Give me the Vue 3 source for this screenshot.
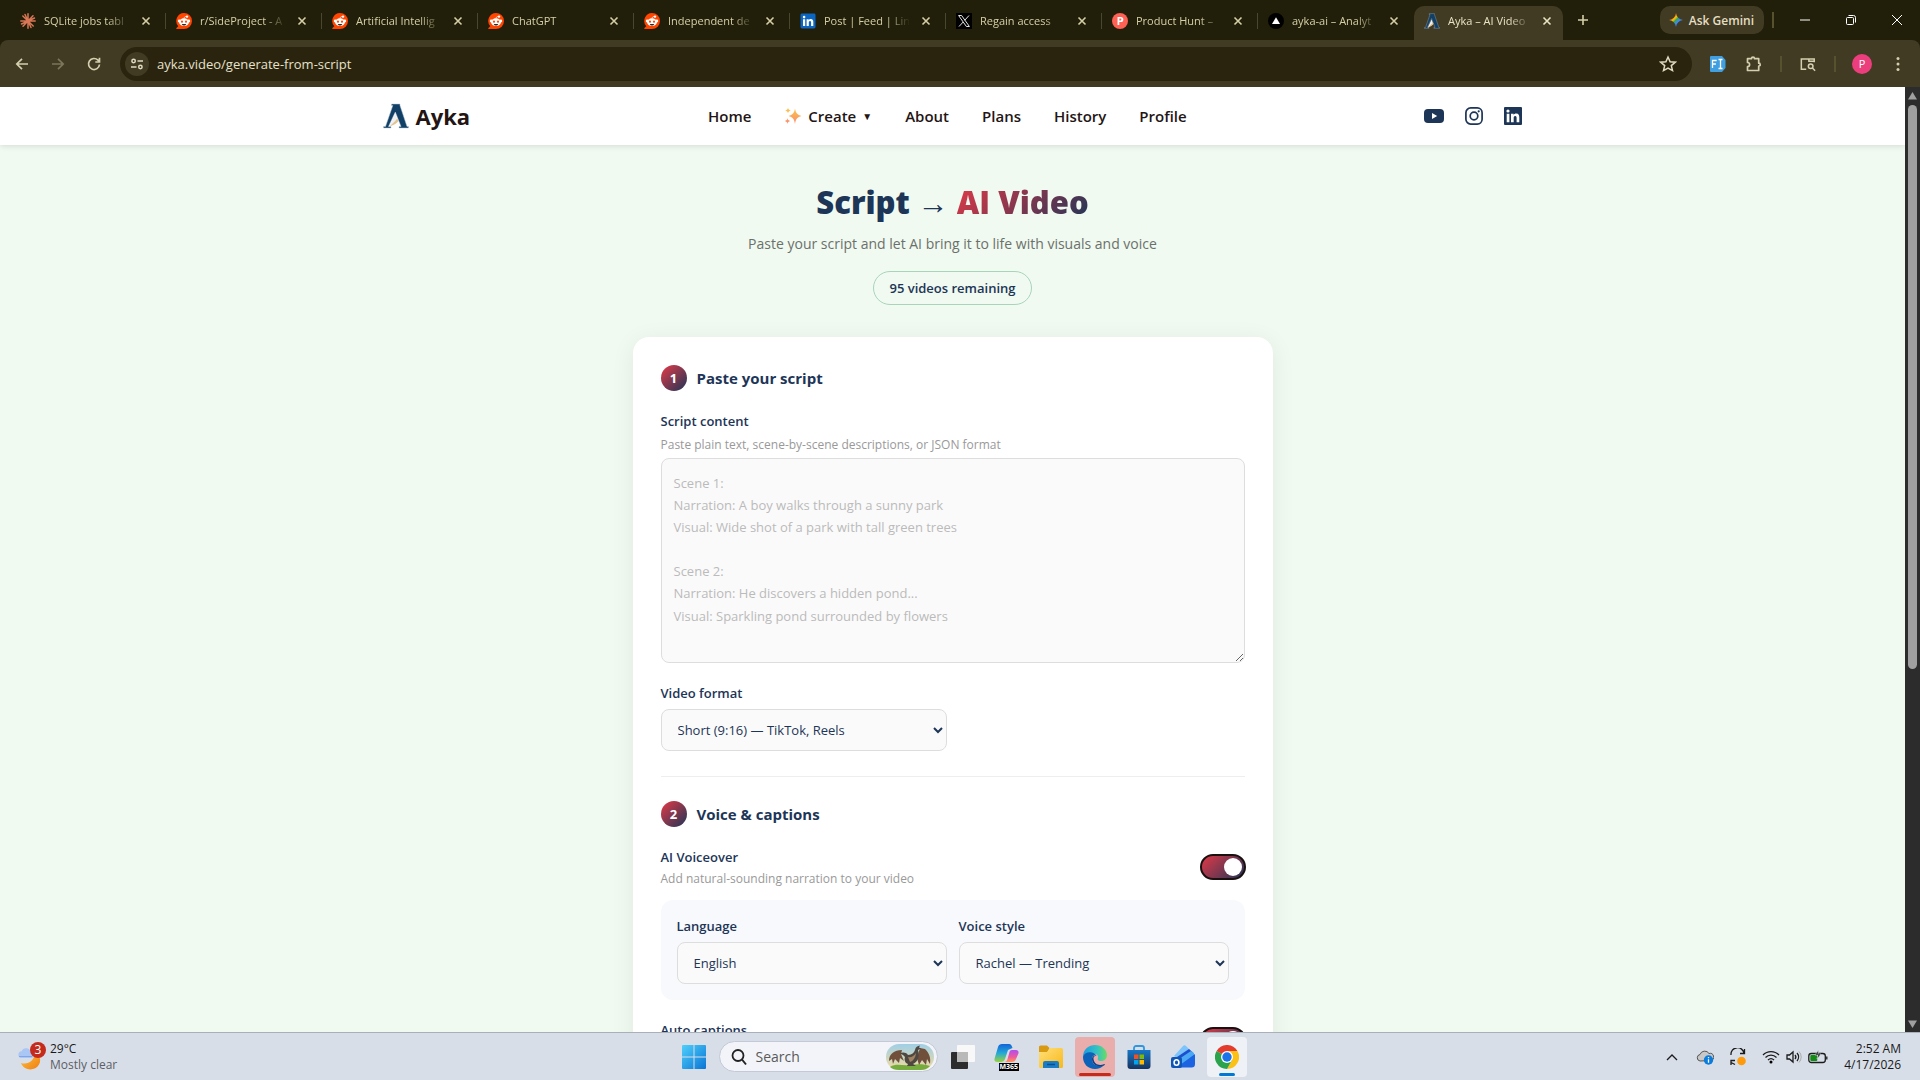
<script setup>
import { ref } from 'vue'

const tabs = [
  { icon: 'claude', title: 'SQLite jobs tabl' },
  { icon: 'reddit', title: 'r/SideProject - A' },
  { icon: 'reddit', title: 'Artificial Intellig' },
  { icon: 'reddit', title: 'ChatGPT' },
  { icon: 'reddit', title: 'Independent de' },
  { icon: 'linkedin', title: 'Post | Feed | Lin' },
  { icon: 'x', title: 'Regain access' },
  { icon: 'producthunt', title: 'Product Hunt –' },
  { icon: 'vercel', title: 'ayka-ai – Analyt' },
  { icon: 'ayka', title: 'Ayka – AI Video', active: true }
]

const placeholder = `Scene 1:
Narration: A boy walks through a sunny park
Visual: Wide shot of a park with tall green trees

Scene 2:
Narration: He discovers a hidden pond...
Visual: Sparkling pond surrounded by flowers`

const url = ref('ayka.video/generate-from-script')
const script = ref('')
const format = ref('short')
const language = ref('en')
const voice = ref('rachel')
const voiceover = ref(true)
const captions = ref(true)
</script>

<template>
  <div class="screen">
    <!-- shared icon shapes -->
    <svg class="sprite" width="0" height="0" aria-hidden="true">
      <defs>
        <linearGradient id="gFolder" x1="0" y1="0" x2="1" y2="1"><stop offset="0" stop-color="#ffe07a" /><stop offset="1" stop-color="#f8b81a" /></linearGradient>
        <linearGradient id="gWin" x1="0" y1="0" x2="1" y2="1"><stop offset="0" stop-color="#4fd0fb" /><stop offset="1" stop-color="#0a74d4" /></linearGradient>
        <linearGradient id="gEdge" x1="0" y1="0" x2="1" y2="0"><stop offset="0" stop-color="#1d9be2" /><stop offset=".6" stop-color="#35c3c0" /><stop offset="1" stop-color="#6bdc62" /></linearGradient>
        <linearGradient id="gStore" x1="0" y1="0" x2="0" y2="1"><stop offset="0" stop-color="#1677c6" /><stop offset="1" stop-color="#17345f" /></linearGradient>
        <linearGradient id="gMoon" x1="0" y1="0" x2="1" y2="1"><stop offset="0" stop-color="#ffc33d" /><stop offset="1" stop-color="#ef7d12" /></linearGradient>
        <linearGradient id="gSpark" x1="0" y1="0" x2="0" y2="1"><stop offset="0" stop-color="#fbc94a" /><stop offset="1" stop-color="#f98b6f" /></linearGradient>
        <linearGradient id="gCopA" x1="0" y1="0" x2="0" y2="1"><stop offset="0" stop-color="#1463d8" /><stop offset=".5" stop-color="#22a8d8" /><stop offset="1" stop-color="#9bd33c" /></linearGradient>
        <linearGradient id="gCopB" x1="0" y1="0" x2="0" y2="1"><stop offset="0" stop-color="#b04df0" /><stop offset=".6" stop-color="#ef5a9c" /><stop offset="1" stop-color="#ff9a52" /></linearGradient>
        <linearGradient id="gGem" x1="0" y1="0" x2="1" y2="1"><stop offset=".2" stop-color="#ea4335" /><stop offset=".4" stop-color="#fbbc04" /><stop offset=".5" stop-color="#34a853" /><stop offset=".62" stop-color="#4285f4" /></linearGradient>
        <linearGradient id="gSky" x1="0" y1="0" x2="0" y2="1"><stop offset="0" stop-color="#9fcfe6" /><stop offset="1" stop-color="#f3dba0" /></linearGradient>
      </defs>

      <symbol id="claude" viewBox="0 0 16 16">
        <g stroke="#d97757" stroke-width="1.5" stroke-linecap="round">
          <path d="M8 8V.8M8 8v7.2M8 8H.8M8 8h7.2M8 8 2.8 3M8 8l5.2 5M8 8l5-5.2M8 8l-5 5.2M8 8 5 1.5M8 8l3 6.5M8 8l6.5-3M8 8l-6.5 3" />
        </g>
      </symbol>
      <symbol id="reddit" viewBox="0 0 16 16">
        <path fill="#ff4500" d="M8 0a8 8 0 1 1 0 16H.7c-.5 0-.7-.6-.3-.9l1.9-1.8A8 8 0 0 1 8 0Z" />
        <circle cx="3.2" cy="8" r="1.4" fill="#fff" /><circle cx="12.8" cy="8" r="1.4" fill="#fff" />
        <ellipse cx="8" cy="9.2" rx="4.9" ry="3.9" fill="#fff" />
        <circle cx="11" cy="3.6" r="1.2" fill="#fff" />
        <path d="M8 5.6c.1-1.5.9-2.1 2.3-2" fill="none" stroke="#fff" stroke-width=".7" />
        <circle cx="6" cy="8.7" r="1.1" fill="#ff4500" /><circle cx="10" cy="8.7" r="1.1" fill="#ff4500" />
        <path d="M5.8 10.9h4.4c-.4 1-1.2 1.5-2.2 1.5s-1.8-.5-2.2-1.5Z" fill="#33261f" />
      </symbol>
      <symbol id="linkedin" viewBox="0 0 16 16">
        <rect x=".5" y=".5" width="15" height="15" rx="1.4" fill="#0a66c2" />
        <g fill="#fff"><circle cx="4.1" cy="4.1" r="1.3" /><path d="M3 6.3h2.2V13H3zM6.6 6.3h2.1v1c.4-.7 1.1-1.2 2.1-1.2 2 0 2.5 1.3 2.5 3.1V13h-2.2V9.7c0-.9-.1-1.7-1.1-1.7s-1.2.8-1.2 1.7V13H6.6z" /></g>
      </symbol>
      <symbol id="x" viewBox="0 0 16 16">
        <rect width="16" height="16" fill="#000" />
        <path d="M2.6 2.5h3l7.8 11h-3zM13 2.5 8.7 7.3M7.2 9 3 13.5" fill="none" stroke="#fff" stroke-width=".9" />
      </symbol>
      <symbol id="producthunt" viewBox="0 0 16 16">
        <circle cx="8" cy="8" r="8" fill="#ff6154" />
        <path fill="#fff" fill-rule="evenodd" d="M5.5 4h3.3a2.5 2.5 0 0 1 0 5.1H7.3V12H5.5zm1.8 1.6v1.9h1.4a1 1 0 0 0 0-1.9z" />
      </symbol>
      <symbol id="vercel" viewBox="0 0 16 16">
        <circle cx="8" cy="8" r="8" fill="#000" /><path d="m8 4.2 4 6.9H4z" fill="#fff" />
      </symbol>
      <symbol id="ayka" viewBox="0 0 26 26">
        <path d="M8.500 1h8.500v1.500L24 23.500h1.500V25H16v-1.500h2L12.300 9 5.500 23.500H8V25H.500v-1.500H2.500L9.800 2.500H8.500z" fill="#123f66" stroke="#b9c9d6" stroke-width=".5" />
        <path d="M12.300 10.500 15 17.500c-2 1-4 3-7.500 5.500l-1.300.5z" fill="#eef1f3" />
        <path d="M14.200 15.500 15.500 18c-2 2.500-4.500 4-8.700 5.500C9 20.500 12 19 14.200 15.500z" fill="#e3c48f" />
      </symbol>
      <symbol id="close" viewBox="0 0 16 16"><path d="m4.5 4.5 7 7m0-7-7 7" stroke="currentColor" stroke-width="1.6" fill="none" /></symbol>
    </svg>

    <div class="tab-strip">
      <div class="tabs" role="tablist">
        <div v-for="(tab, i) in tabs" :key="i" class="tab" :class="{ active: tab.active }" role="tab">
          <svg class="favicon"><use :href="'#' + tab.icon" /></svg>
          <span class="tab-title">{{ tab.title }}</span>
          <button class="tab-close" aria-label="Close tab"><svg><use href="#close" /></svg></button>
        </div>
      </div>
      <button class="new-tab" aria-label="New tab">
        <svg width="16" height="16" viewBox="0 0 16 16"><path d="M8 3v10M3 8h10" stroke="currentColor" stroke-width="1.6" /></svg>
      </button>
      <div class="window-tools">
        <button class="gemini">
          <svg width="14" height="16" viewBox="0 0 14 14"><path fill="url(#gGem)" d="M7 0c.6 4 3 6.4 7 7-4 .6-6.4 3-7 7-.6-4-3-6.400-7-7 4-.6 6.400-3 7-7Z" /></svg>
          Ask Gemini
        </button>
        <i class="tool-sep"></i>
        <button class="win-btn" aria-label="Minimize"><svg width="12" height="12" viewBox="0 0 12 12"><path d="M1 6h10" /></svg></button>
        <button class="win-btn" aria-label="Restore"><svg width="12" height="12" viewBox="0 0 12 12"><rect x="1.5" y="3.5" width="7" height="7" rx="1" /><path d="M3.5 1.5h5a2 2 0 0 1 2 2v5" /></svg></button>
        <button class="win-btn" aria-label="Close"><svg width="12" height="12" viewBox="0 0 12 12"><path d="m1 1 10 10M11 1 1 11" /></svg></button>
      </div>
    </div>

    <div class="toolbar">
      <button class="nav-btn" aria-label="Back"><svg viewBox="0 0 16 16"><path d="M14 8H3M8 2.8 2.8 8 8 13.2" /></svg></button>
      <button class="nav-btn dim" aria-label="Forward"><svg viewBox="0 0 16 16"><path d="M2 8h11M8 2.8 13.2 8 8 13.2" /></svg></button>
      <button class="nav-btn" aria-label="Reload"><svg viewBox="0 0 16 16"><path d="M13.5 8.500A5.500 5.500 0 1 1 12 4.200l1.400 1.500M13.500 1.800v4.200H9.300" /></svg></button>
      <div class="omnibox">
        <span class="site-info">
          <svg width="14" height="14" viewBox="0 0 14 14"><circle cx="3.6" cy="4" r="1.7" /><path d="M7.5 4H13M1 10h5.5" /><circle cx="10.4" cy="10" r="1.7" /></svg>
        </span>
        <input v-model="url" class="url" aria-label="Address bar" type="text">
        <svg width="18" height="18" viewBox="0 0 18 18" class="star"><path d="m9 2 2.100 4.700 5.100.5-3.900 3.400 1.200 5L9 13l-4.500 2.600 1.200-5-3.900-3.400 5.100-.5z" /></svg>
      </div>
      <div class="extensions">
        <button class="nav-btn" aria-label="Font finder">
          <svg viewBox="0 0 16 16"><path d="M1 0h11l3.500 4v8L12 16H1a1 1 0 0 1-1-1V1a1 1 0 0 1 1-1Z" fill="#3f9fe0" stroke="none" /><path d="M2.500 12V4.500h4.200M2.500 8h3.400M8.500 3.500h4M8.500 12.500h4M10.500 3.500v9" stroke="#fff" stroke-width="1.3" /></svg>
        </button>
        <button class="nav-btn" aria-label="Extensions"><svg viewBox="0 0 16 16"><path d="M1.500 2.700h4a1.500 1.500 0 0 1 3 0h4.200v4.500a1.500 1.500 0 0 1 0 3v4.300H1.500V10.700a2.100 2.100 0 0 0 0-4.200z" stroke-linejoin="round" /></svg></button>
        <i class="tool-sep"></i>
        <button class="nav-btn" aria-label="Search in page"><svg viewBox="0 0 18 16"><path d="M7 14H1.500V2.500H16V6M10 2.500h6V5h-6z" /><circle cx="12" cy="10.5" r="2.6" /><path d="m14 12.500 3 3" /></svg></button>
        <i class="tool-sep"></i>
        <button class="avatar">P</button>
        <button class="nav-btn" aria-label="Menu"><svg viewBox="0 0 16 16"><g fill="#d5cfb0" stroke="none"><circle cx="8" cy="2.5" r="1.5" /><circle cx="8" cy="8" r="1.5" /><circle cx="8" cy="13.5" r="1.5" /></g></svg></button>
      </div>
    </div>

    <div class="viewport">
      <div class="page">
        <header class="site-header">
          <div class="container">
            <a class="brand" href="#">
              <svg width="26" height="26"><use href="#ayka" /></svg>
              <span>Ayka</span>
            </a>
            <nav class="site-nav">
              <a href="#">Home</a>
              <a href="#" class="create">
                <svg width="18" height="18" viewBox="0 0 18 18"><path fill="url(#gSpark)" d="M11 1.500c.8 4.500 2.300 6.500 6.500 7.500-4.200 1-5.700 3-6.500 8-.8-5-2.300-7-6.500-8C8.700 8 10.200 6 11 1.500ZM4 .5c.3 1.800 1 2.500 2.700 3C5 4 4.300 4.700 4 6.500c-.3-1.800-1-2.500-2.700-3C3 3 3.700 2.300 4 .5ZM3.500 11c.3 1.800 1 2.500 2.700 3-1.700.5-2.400 1.200-2.700 3-.3-1.800-1-2.500-2.700-3 1.700-.5 2.400-1.200 2.700-3Z" /></svg>
                Create <small>▼</small>
              </a>
              <a href="#">About</a>
              <a href="#">Plans</a>
              <a href="#">History</a>
              <a href="#">Profile</a>
            </nav>
            <div class="socials">
              <a href="#" aria-label="YouTube"><svg width="20" height="18" viewBox="0 0 20 18"><rect y="2" width="20" height="14" rx="4" fill="#1d3557" /><path d="m8 6 5.200 3L8 12z" fill="#fff" /></svg></a>
              <a href="#" aria-label="Instagram"><svg width="18" height="18" viewBox="0 0 18 18"><g fill="none" stroke="#1d3557" stroke-width="1.7"><rect x=".9" y=".9" width="16.2" height="16.2" rx="4.8" /><circle cx="9" cy="9" r="3.8" /></g><circle cx="13.7" cy="4.3" r="1.1" fill="#1d3557" /></svg></a>
              <a href="#" aria-label="LinkedIn"><svg width="18" height="18" viewBox="0 0 18 18"><rect width="18" height="18" rx="1" fill="#1d3557" /><g fill="#fff"><circle cx="4" cy="4" r="1.6" /><path d="M2.700 6.800h2.700v8.500H2.700zM7 6.800h2.600V8c.5-.8 1.400-1.400 2.600-1.400 2.600 0 3.100 1.700 3.100 4v4.700h-2.700v-4.200c0-1 0-2.200-1.400-2.200s-1.500 1-1.500 2.200v4.200H7z" /></g></svg></a>
            </div>
          </div>
        </header>

        <main class="content">
          <h1>Script → <span class="accent">AI Video</span></h1>
          <p class="subtitle">Paste your script and let AI bring it to life with visuals and voice</p>
          <div class="badge">95 videos remaining</div>

          <form class="card" @submit.prevent>
            <section>
              <h2 class="step"><span class="step-num">1</span>Paste your script</h2>
              <div class="field">
                <label for="script">Script content</label>
                <p class="hint">Paste plain text, scene-by-scene descriptions, or JSON format</p>
                <textarea id="script" v-model="script" rows="8" :placeholder="placeholder"></textarea>
              </div>
              <div class="field-row">
                <div class="field">
                  <label for="format">Video format</label>
                  <select id="format" v-model="format">
                    <option value="short">Short (9:16) — TikTok, Reels</option>
                  </select>
                </div>
              </div>
            </section>

            <section class="divided">
              <h2 class="step"><span class="step-num">2</span>Voice &amp; captions</h2>
              <div class="toggle-row">
                <div>
                  <label for="voiceover">AI Voiceover</label>
                  <p class="toggle-hint">Add natural-sounding narration to your video</p>
                </div>
                <input id="voiceover" v-model="voiceover" type="checkbox" class="switch">
              </div>
              <div class="panel field-row">
                <div class="field">
                  <label for="language">Language</label>
                  <select id="language" v-model="language">
                    <option value="en">English</option>
                  </select>
                </div>
                <div class="field">
                  <label for="voice">Voice style</label>
                  <select id="voice" v-model="voice">
                    <option value="rachel">Rachel — Trending</option>
                  </select>
                </div>
              </div>
              <div class="toggle-row">
                <div>
                  <label for="captions">Auto captions</label>
                  <p class="toggle-hint">&nbsp;</p>
                </div>
                <input id="captions" v-model="captions" type="checkbox" class="switch">
              </div>
            </section>
          </form>
        </main>
      </div>

      <div class="scrollbar">
        <svg width="9" height="8" viewBox="0 0 9 8"><path d="M4.500 0 9 7.500H0z" /></svg>
        <div class="track"><div class="thumb"></div></div>
        <svg width="9" height="8" viewBox="0 0 9 8"><path d="M4.500 8 0 .5h9z" /></svg>
      </div>
    </div>

    <footer class="taskbar">
      <div class="weather">
        <div class="weather-icon">
          <svg width="26" height="28" viewBox="0 0 26 28"><path d="M3 20c7 2 13-2 14-10 5 2 6.500 7 4 11.500C17 28.500 6 28 3 20Z" fill="url(#gMoon)" /><path d="M3 15a3.400 3.400 0 0 1 .6-6.700 4.700 4.700 0 0 1 9 .7A3 3 0 0 1 13 15z" fill="#a9c6f4" /><path d="M1 13.500h13" stroke="#7fa6e6" /></svg>
          <b>3</b>
        </div>
        <div class="weather-text"><span>29°C</span><span class="muted">Mostly clear</span></div>
      </div>

      <div class="apps">
        <button class="app" aria-label="Start"><svg width="24" height="24" viewBox="0 0 24 24"><path fill="url(#gWin)" d="M0 1a1 1 0 0 1 1-1h10.500v11.500H0zM12.500 0H23a1 1 0 0 1 1 1v10.500H12.500zM0 12.500h11.500V24H1a1 1 0 0 1-1-1zM12.500 12.500H24V23a1 1 0 0 1-1 1H12.500z" /></svg></button>
        <button class="search">
          <svg width="16" height="18" viewBox="0 0 16 18"><circle cx="7" cy="7.5" r="5.5" fill="none" stroke="#222" stroke-width="1.8" /><path d="m11 11.500 4 5" stroke="#222" stroke-width="2" /></svg>
          <span>Search</span>
          <svg class="search-art" width="48" height="26" viewBox="0 0 48 26">
            <rect width="48" height="26" rx="13" fill="url(#gSky)" />
            <path d="M4 23c6-4 12-1 20-2s14-1 20 1c-3 3-6 4-9 4H13c-4 0-7-1-9-3Z" fill="#76ac3d" />
            <path d="M3 17C3 10 8 6 16 6l-1 4 3 7-4-3-1 5-4-4-2 5-1-5z" fill="#70503a" />
            <path d="M34 4l5 1c4 4 6 8 5 15l-3-5-1 6-4-5-3 5-2-7z" fill="#70503a" />
            <path d="M14 9.500c2-1.500 6-1.500 8 1.500 4-.5 6-2 7-5 .5-3 2.500-4 5-4.500l-1 2 2 1-3 1.500c2 6 0 12-5 14l3 2h-9l1-2c-3-1-4-4-3-7l-2-2z" fill="#4f4840" />
            <path d="M22 13c3 1 6-1 8-4-.5 5-3 8-6 9z" fill="#a08262" />
          </svg>
        </button>
        <button class="app" aria-label="Task view"><svg width="24" height="24" viewBox="0 0 24 24"><rect x="6" width="18" height="17" rx="1" fill="#f8f8f8" /><rect y="7" width="17" height="17" rx="1" fill="#2d2d2d" /><path d="M6 7h11v10H6z" fill="#b9b9b9" /></svg></button>
        <button class="app" aria-label="Microsoft 365">
          <svg width="26" height="26" viewBox="0 0 26 26"><path d="M8 0h7c2 0 3 2 3.500 4L14 6l-3 9c-.7 2-2 3-4 3H3c-2 0-3-1.500-2.400-3.500L4 3c.6-2 2-3 4-3Z" fill="url(#gCopA)" /><path d="M18 6h4c2 0 3 1.500 2.400 3.500L22 15c-.7 2-2 3-4 3h-8c2 0 3-1 3.500-3l2-7c.4-1.300 1-2 2.500-2Z" fill="url(#gCopB)" /></svg>
          <span class="m365">M365</span>
        </button>
        <button class="app" aria-label="Files"><svg width="24" height="24" viewBox="0 0 24 24"><path d="M0 2a1.500 1.500 0 0 1 1.500-1.500H8L10.500 3 8 8H0z" fill="#d89a10" /><path d="M0 7h8l3-4h11.500A1.500 1.500 0 0 1 24 4.500v17a1.500 1.500 0 0 1-1.500 1.500h-21A1.500 1.500 0 0 1 0 21.500z" fill="url(#gFolder)" /><path d="M4 23v-5a2 2 0 0 1 2-2h12a2 2 0 0 1 2 2v5z" fill="#1a7cc4" /><path d="M8 19.500h8" stroke="#0c4f91" stroke-width="1.5" /></svg></button>
        <button class="app alert" aria-label="Edge"><svg width="24" height="24" viewBox="0 0 24 24"><path d="M0 12C0 4 6 0 12 0c7 0 12 5 12 10 0 4-3 6-6 6-2.500 0-4-1-3-3 .5-1 .2-4-3.500-4C7 9 5 14 0 12Z" fill="url(#gEdge)" /><path d="M0 12C1 8 5 6.500 9 7.500c2 .5 4 2 4.500 3.500C11 9.500 9 11 9 14c0 5 5 9 12 6-2 2.800-5.500 4-9 4C5 24 0 19 0 12Z" fill="#0b62b8" /><path d="M9 14c0 5 5 9 12 6.500.8-.5 1.300-1.500.5-1.500-5 2-10 1-11-5-.3-1.500.5-2.500 1.500-3C10 10.500 9 12 9 14Z" fill="#0c3f86" /></svg></button>
        <button class="app" aria-label="Store"><svg width="24" height="24" viewBox="0 0 24 24"><path d="M7 6V3a2 2 0 0 1 2-2h6a2 2 0 0 1 2 2v3" fill="none" stroke="#2f97e0" stroke-width="1.8" /><path d="M.5 5h23v16a3 3 0 0 1-3 3h-17a3 3 0 0 1-3-3z" fill="url(#gStore)" /><path d="M7 9.500h4.500V14H7z" fill="#f25022" /><path d="M12.500 9.500H17V14h-4.500z" fill="#7fba00" /><path d="M7 15h4.500v4.500H7z" fill="#00a4ef" /><path d="M12.500 15H17v4.500h-4.500z" fill="#ffb900" /></svg></button>
        <button class="app" aria-label="Outlook"><svg width="24" height="24" viewBox="0 0 24 24"><path d="M3 11 12 1a2 2 0 0 1 3 0l4 4-9 10z" fill="#7cc4fb" /><path d="M6 12 18 4l4 3.500L11 16z" fill="#1a4fd0" /><path d="m8 14 12-8 3 2v4l-12 8z" fill="#4aa8f5" /><path d="m9 20 15-11v10a3.500 3.500 0 0 1-3.500 3.500H9z" fill="#1b63e0" /><rect y="12" width="11" height="11" rx="2" fill="#0f55b5" /><ellipse cx="5.5" cy="17.5" rx="2.4" ry="2.7" fill="none" stroke="#fff" stroke-width="1.6" /></svg></button>
        <button class="app current" aria-label="Chrome"><svg width="24" height="24" viewBox="0 0 24 24"><path d="M12 12 1.600 6A12 12 0 0 1 22.400 6z" fill="#e33b2e" /><path d="M12 12V6h10.400A12 12 0 0 1 12 24l5-9z" fill="#fbc116" /><path d="M12 12l5 3-5 9A12 12 0 0 1 1.600 6z" fill="#2ba24c" /><circle cx="12" cy="12" r="6" fill="#fff" /><circle cx="12" cy="12" r="4.7" fill="#1a73e8" /></svg></button>
      </div>

      <div class="tray">
        <svg width="12" height="8" viewBox="0 0 12 8"><path d="m1 7 5-5 5 5" class="line" /></svg>
        <svg width="18" height="16" viewBox="0 0 18 16" class="cloud"><path d="M4 12a3.300 3.300 0 0 1 0-6.500A5 5 0 0 1 13 4.500a3.600 3.600 0 0 1 2 7z" fill="#c8c8c8" stroke="#555" /><circle cx="12.5" cy="11" r="4.7" fill="#0b7cdb" /><path d="M12.500 8v1.300M12.500 10.300v3.500" stroke="#fff" stroke-width="1.3" /></svg>
        <svg width="18" height="18" viewBox="0 0 18 18" class="sync"><path d="M2 7a6.500 6.500 0 0 1 13-1.500M15.500 1v4.500H11M6 16.500l-4-2M2 17v-4.500h4" class="line" /><circle cx="12.5" cy="13" r="4.3" fill="#ff9a0a" /></svg>
        <svg width="18" height="14" viewBox="0 0 18 14" class="wifi"><path d="M1 5a11 11 0 0 1 16 0M3.500 7.500a7.700 7.700 0 0 1 11 0M6 10a4.400 4.400 0 0 1 6 0" class="line" /><circle cx="9" cy="12" r="1.5" /></svg>
        <svg width="16" height="14" viewBox="0 0 16 14"><path d="M1 5h2.500L7 2v10L3.500 9H1zM9 5a3 3 0 0 1 0 4M11 3a6 6 0 0 1 0 8" class="line" /><path d="M13 1.500a8 8 0 0 1 0 11" stroke="#aaa" fill="none" /></svg>
        <svg width="20" height="14" viewBox="0 0 20 14"><rect x=".8" y="3.5" width="16.5" height="9" rx="2.5" class="line" /><path d="M18.800 6.500v3" class="line" /><rect x="2.3" y="5" width="7" height="6" rx="1" fill="#138a13" /><path d="M10.500 0 7 5h3l-1 4 4-5h-3z" fill="#111" stroke="#d9dfe9" stroke-width=".6" /></svg>
        <div class="clock"><span>2:52 AM</span><span>4/17/2026</span></div>
      </div>
    </footer>
  </div>
</template>

<style>
body {
  margin: 0;
  overflow: hidden;
}
</style>

<style scoped>
.screen {
  height: 100vh;
  display: flex;
  flex-direction: column;
  font-family: "Segoe UI", "Open Sans", "Noto Sans", sans-serif;
  background: #211f09;
}

.screen *,
.screen *::before {
  box-sizing: border-box;
}

.sprite {
  position: absolute;
}

button {
  font: inherit;
  color: inherit;
  background: none;
  border: none;
  padding: 0;
}

button,
a {
  display: flex;
  align-items: center;
  justify-content: center;
}

a {
  color: inherit;
  text-decoration: none;
}

p,
h1,
h2 {
  margin: 0;
}

/* browser window */
.tab-strip {
  display: flex;
  align-items: flex-end;
  height: 40px;
  padding-left: 10px;
  background: #211f09;
  color: #d5cfa8;
  flex-shrink: 0;
}

.tabs {
  display: flex;
}

.tab {
  position: relative;
  display: flex;
  align-items: center;
  width: 156px;
  height: 34px;
  padding: 0 12px 5px 10px;
  gap: 8px;
  font-size: 11px;
}

.tab::after {
  content: '';
  position: absolute;
  right: 0;
  top: 7px;
  width: 1px;
  height: 16px;
  background: #4a4630;
}

.tab.active {
  width: 149px;
  padding-right: 8px;
  background: #413b24;
  color: #e9e3c4;
  border-radius: 10px 10px 0 0;
}

.tab.active::after,
.tab:nth-last-child(2)::after {
  display: none;
}

.favicon {
  width: 16px;
  height: 16px;
  flex-shrink: 0;
}

.tab-title {
  flex: 1;
  white-space: nowrap;
  mask-image: linear-gradient(90deg, #000 74%, transparent 100%);
}

.tab-close svg {
  width: 16px;
  height: 16px;
}

.new-tab {
  width: 40px;
  height: 40px;
}

.window-tools {
  display: flex;
  align-items: center;
  align-self: stretch;
  margin-left: auto;
}

.gemini {
  height: 28px;
  padding: 0 10px 0 9px;
  gap: 6px;
  border-radius: 10px;
  background: #413b24;
  color: #e4dec2;
  font-size: 12px;
  font-weight: 600;
}

.tool-sep {
  width: 2px;
  height: 16px;
  margin: 0 8px;
  background: #57512f;
}

.win-btn {
  width: 46px;
  height: 40px;
}

.win-btn svg {
  fill: none;
  stroke: #fff;
}

.toolbar {
  display: flex;
  align-items: center;
  height: 47px;
  padding: 0 4px;
  background: #413b24;
  border-radius: 8px 8px 0 0;
  flex-shrink: 0;
}

.nav-btn {
  width: 36px;
  height: 36px;
  color: #d5cfb0;
}

.nav-btn.dim {
  color: #7c765a;
}

.nav-btn svg {
  width: 16px;
  height: 16px;
  fill: none;
  stroke: currentColor;
  stroke-width: 1.7;
}

.omnibox {
  flex: 1;
  display: flex;
  align-items: center;
  height: 34px;
  margin: 0 8px;
  padding: 0 15px 0 5px;
  border-radius: 17px;
  background: #2a240e;
}

.site-info {
  display: flex;
  align-items: center;
  justify-content: center;
  width: 24px;
  height: 24px;
  border-radius: 50%;
  background: #413b24;
}

.site-info svg,
.star {
  fill: none;
  stroke: #e0dac0;
  stroke-width: 1.5;
}

.url {
  flex: 1;
  border: none;
  padding: 0 8px;
  background: none;
  color: #e6e1cb;
  font: inherit;
  font-size: 13px;
}

.extensions {
  display: flex;
  align-items: center;
}

.avatar {
  width: 20px;
  height: 20px;
  margin: 0 8px;
  border-radius: 50%;
  background: #ec3e7c;
  color: #fff;
  font-size: 11px;
}

/* web page */
.viewport {
  flex: 1;
  min-height: 0;
  display: flex;
}

.page {
  flex: 1;
  overflow: hidden;
  background: #f0faf0;
}

.site-header {
  position: relative;
  background: #fff;
  box-shadow: 0 1px 6px rgba(0, 0, 0, 0.12);
}

.container {
  display: flex;
  align-items: center;
  justify-content: space-between;
  max-width: 1140px;
  height: 58px;
  margin: 0 auto;
  color: #241515;
}

.brand {
  gap: 7px;
  font-size: 22px;
  font-weight: 700;
}

.site-nav {
  display: flex;
  gap: 33px;
  font-size: 15px;
  font-weight: 600;
}

.create {
  gap: 6px;
}

.create small {
  font-size: 10px;
}

.socials {
  display: flex;
  gap: 21px;
}

.content {
  display: flex;
  flex-direction: column;
  align-items: center;
  padding-top: 37px;
}

h1 {
  font-size: 31px;
  line-height: 40px;
  font-weight: 800;
  color: #1d3557;
}

.accent {
  background: linear-gradient(135deg, #e63946, #1d3557);
  background-clip: text;
  -webkit-background-clip: text;
  -webkit-text-fill-color: transparent;
}

.subtitle {
  margin-top: 10px;
  font-size: 14px;
  line-height: 24px;
  color: #6c706c;
}

.badge {
  margin-top: 15px;
  padding: 0 15px;
  border: 1px solid #a8d5ba;
  border-radius: 17px;
  font-size: 13px;
  line-height: 32px;
  font-weight: 600;
  color: #1d3557;
}

.card {
  width: 100%;
  max-width: 640px;
  margin-top: 32px;
  padding: 28px;
  border-radius: 16px;
  background: #fff;
  box-shadow: 0 4px 24px rgba(0, 0, 0, 0.07);
  color: #1d3557;
}

.divided {
  margin-top: 25px;
  padding-top: 24px;
  border-top: 1px solid #eee;
}

.step {
  display: flex;
  align-items: center;
  gap: 10px;
  margin-bottom: 20px;
  font-size: 15px;
  line-height: 26px;
  font-weight: 700;
}

.step-num {
  width: 26px;
  height: 26px;
  border-radius: 50%;
  background: linear-gradient(135deg, #e63946, #1d3557);
  color: #fff;
  font-size: 13px;
  text-align: center;
}

.field label {
  display: block;
  margin-bottom: 6px;
  font-size: 13px;
  line-height: 20px;
  font-weight: 600;
}

.hint {
  margin-bottom: 5px;
  font-size: 12px;
  line-height: 16px;
  color: #999;
}

textarea,
select {
  display: block;
  width: 100%;
  border: 1px solid #ddd;
  border-radius: 8px;
  background: #fafafa;
  color: #1d3557;
  font: inherit;
  font-size: 13px;
}

textarea {
  padding: 13px 12px;
  line-height: 1.7;
  resize: vertical;
}

textarea::placeholder {
  color: #bbb;
}

select {
  height: 42px;
  padding: 0 12px;
}

.field-row {
  display: grid;
  grid-template-columns: 1fr 1fr;
  gap: 12px;
}

.field + .field-row {
  margin-top: 20px;
}

.toggle-row {
  display: flex;
  align-items: center;
  justify-content: space-between;
}

.toggle-row label {
  display: block;
  font-size: 13px;
  line-height: 21px;
  font-weight: 600;
}

.toggle-hint {
  margin-top: 2px;
  font-size: 12px;
  line-height: 18px;
  color: #999;
}

.switch {
  appearance: none;
  display: flex;
  align-items: center;
  width: 44px;
  height: 24px;
  margin: 0;
  padding: 3px;
  border-radius: 12px;
  background: #ccc;
  outline: 2px solid #1a1010;
  outline-offset: -1px;
}

.switch::before {
  content: '';
  width: 18px;
  height: 18px;
  border-radius: 50%;
  background: #fff;
}

.switch:checked {
  justify-content: flex-end;
  background: linear-gradient(135deg, #e63946, #1d3557);
}

.panel {
  margin: 12px 0 20px;
  padding: 16px;
  border-radius: 12px;
  background: #f8f9fc;
}

.scrollbar {
  display: flex;
  flex-direction: column;
  align-items: center;
  width: 15px;
  padding: 5px 0 4px;
  gap: 5px;
  background: #2c2c2c;
}

.scrollbar svg {
  fill: #9f9f9f;
}

.track {
  flex: 1;
}

.thumb {
  width: 9px;
  height: 62%;
  border-radius: 5px;
  background: #9f9f9f;
}

/* taskbar */
.taskbar {
  position: relative;
  display: grid;
  grid-template-columns: 1fr auto 1fr;
  align-items: center;
  height: 48px;
  border-top: 1px solid #aab0b8;
  background: #d8dee8;
  color: #191919;
  font-size: 12px;
  line-height: 16px;
  flex-shrink: 0;
}

.weather {
  display: flex;
  align-items: center;
  padding-left: 18px;
  gap: 6px;
}

.weather-icon {
  position: relative;
  display: flex;
}

.weather-icon b {
  position: absolute;
  right: -2px;
  top: -1px;
  width: 16px;
  height: 16px;
  border-radius: 50%;
  background: #c42b1c;
  color: #fff;
  font-weight: 400;
  text-align: center;
}

.weather-text,
.clock {
  display: flex;
  flex-direction: column;
}

.muted {
  color: #5c5f66;
}

.apps {
  display: flex;
  align-items: center;
  gap: 4px;
}

.app {
  position: relative;
  width: 40px;
  height: 40px;
  border-radius: 4px;
}

.m365 {
  position: absolute;
  left: 12px;
  bottom: 6px;
  padding: 0 1px;
  background: #000;
  color: #fff;
  font-size: 7px;
  line-height: 8px;
  font-weight: 700;
}

.app.alert {
  background: #e9adab;
}

.app.current {
  background: #eef1f6;
}

.app.alert::after,
.app.current::after {
  content: '';
  position: absolute;
  bottom: 1px;
  width: 32px;
  height: 3px;
  border-radius: 2px;
  background: #c42b1c;
}

.app.current::after {
  width: 16px;
  background: #0078d4;
}

.search {
  width: 219px;
  height: 31px;
  margin: 0 1px;
  padding: 0 3px 0 11px;
  gap: 9px;
  border: 1px solid #c3c9d6;
  border-radius: 16px;
  background: #f2f4f9;
  color: #5a5a5a;
  font-size: 14px;
}

.search-art {
  margin-left: auto;
}

.tray {
  display: flex;
  align-items: center;
  justify-content: flex-end;
  padding-right: 19px;
  gap: 6px;
}

.line {
  fill: none;
  stroke: #1b1b1b;
  stroke-width: 1.3;
}

.cloud {
  margin-left: 12px;
}

.sync,
.wifi {
  margin-left: 9px;
}

.clock {
  margin-left: 10px;
  text-align: right;
}
</style>
